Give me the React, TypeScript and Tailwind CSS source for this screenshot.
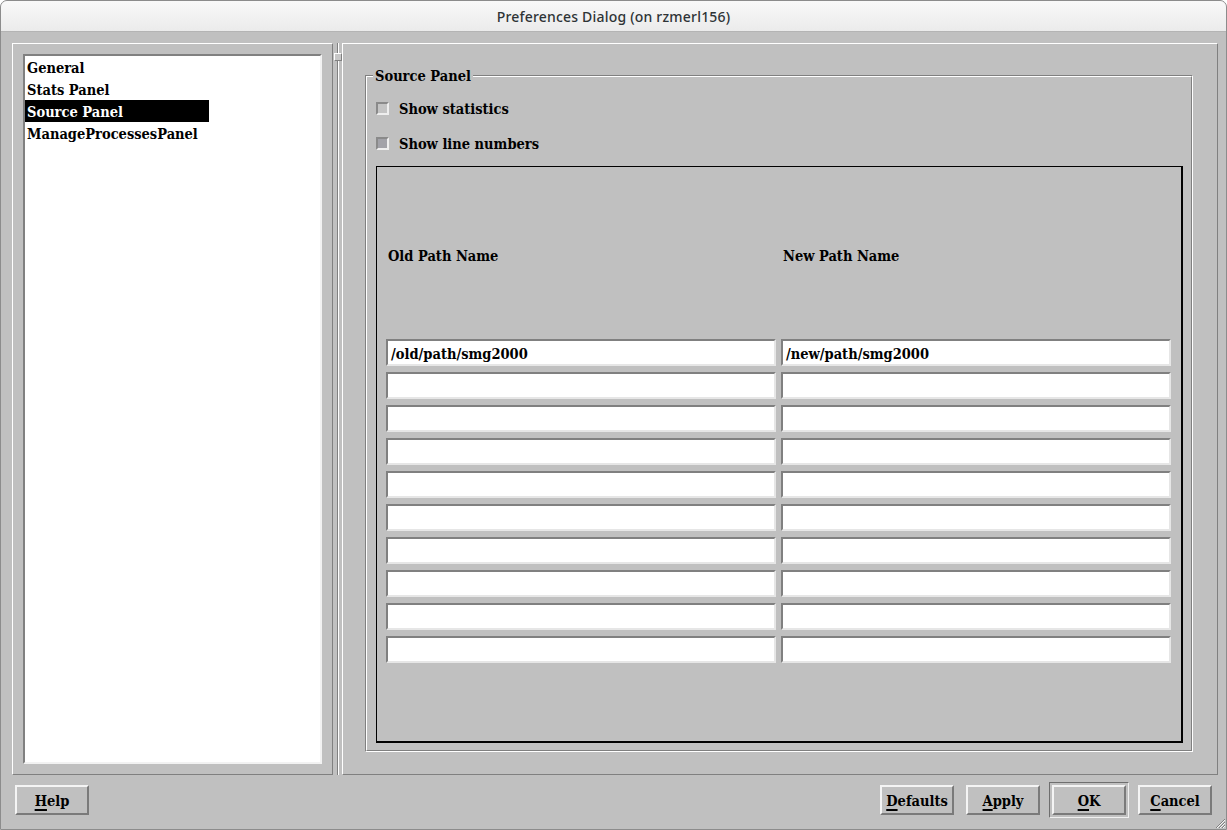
import React from 'react';

const serif = "font-['DejaVu_Serif',serif] [font-stretch:condensed] font-bold text-[14.5px] text-black relative top-[1px]";

const items = ['General', 'Stats Panel', 'Source Panel', 'ManageProcessesPanel'];

function Button({ label, className = '' }: { label: string; className?: string }) {
  return (
    <div
      className={`h-[30px] w-[74px] flex items-center justify-center border-2 border-t-[#f4f4f4] border-l-[#f4f4f4] border-b-[#7a7a7a] border-r-[#7a7a7a] bg-[#c0c0c0] ${className}`}>
      <span className={serif}>
        <span className="underline decoration-2 underline-offset-[3px]">{label[0]}</span>
        {label.slice(1)}
      </span>
    </div>
  );
}

function PathInput({ value }: { value?: string }) {
  return (
    <div className="h-[27px] bg-white border-2 border-t-[#808080] border-l-[#808080] border-b-[#e6e6e6] border-r-[#e6e6e6] flex items-center pl-[3px]">
      <span className={serif}>{value}</span>
    </div>
  );
}

function Checkbox({ label, checked }: { label: string; checked?: boolean }) {
  return (
    <div className="h-[22px] flex items-center gap-[10px]">
      <div
        className={`w-[13px] h-[13px] border-2 border-t-[#8a8a8a] border-l-[#8a8a8a] border-b-[#eeeeee] border-r-[#eeeeee] ${checked ? 'bg-[#a2a2a8]' : 'bg-[#c4c4c4]'}`}
      />
      <span className={serif}>{label}</span>
    </div>
  );
}

export default function App() {
  const rows = [
    ['/old/path/smg2000', '/new/path/smg2000'],
    ...Array.from({ length: 9 }, () => ['', '']),
  ];

  return (
    <div className="w-[1227px] h-[830px] flex flex-col border border-[#8c8c8c] rounded-t-[7px] overflow-hidden bg-[#c0c0c0]">
      <div className="h-[31px] shrink-0 flex items-center justify-center bg-gradient-to-b from-[#f9f9f9] to-[#ebebeb] border-b border-[#b4b4b4]">
        <span className="font-['Noto_Sans',sans-serif] text-[14px] tracking-[0.2px] text-[#2e3436] font-medium">
          Preferences Dialog (on rzmerl156)
        </span>
      </div>

      <div className="flex-1 flex flex-col pt-[11px] pl-[11px] pr-[8px]">
        <div className="flex h-[732px]">
          {/* left tree panel */}
          <div className="w-[321px] border border-t-white border-l-white border-b-[#808080] border-r-[#808080] p-[10px]">
            <div className="h-full bg-white border-2 border-t-[#808080] border-l-[#808080] border-b-[#f2f2f2] border-r-[#f2f2f2]">
              {items.map((it) => (
                <div
                  key={it}
                  className={`h-[22px] w-[184px] flex items-center pl-[2px] ${it === 'Source Panel' ? 'bg-black' : ''}`}>
                  <span className={`${serif} ${it === 'Source Panel' ? '!text-white' : ''}`}>{it}</span>
                </div>
              ))}
            </div>
          </div>

          {/* splitter */}
          <div className="w-[9px] relative flex justify-center">
            <div className="w-[2px] h-full border-l border-l-[#808080] border-r border-r-white" />
            <div className="absolute top-[10px] left-[1px] w-[8px] h-[8px] bg-[#c8c8c8] border border-t-white border-l-white border-b-[#808080] border-r-[#808080]" />
          </div>

          {/* right panel */}
          <div className="flex-1 border border-t-white border-l-white border-b-[#808080] border-r-[#808080] pt-[31px] pl-[22px] pr-[24px] pb-[22px]">
            <div className="relative h-full border border-t-[#808080] border-l-[#808080] border-b-white border-r-white">
              <div className="h-full border border-t-white border-l-white border-b-[#808080] border-r-[#808080] flex flex-col pt-[20px] pl-[9px] pr-[8px] pb-[7px]">
                <Checkbox label="Show statistics" />
                <div className="mt-[13px]">
                  <Checkbox label="Show line numbers" checked />
                </div>
                <div className="mt-[12px] flex-1 border-t border-l border-r-2 border-b-2 border-black pt-[77px] px-[9px]">
                  <div className="grid grid-cols-[390px_390px] gap-x-[5px]">
                    <div className="h-[22px] flex items-center pl-[2px]"><span className={serif}>Old Path Name</span></div>
                    <div className="h-[22px] flex items-center pl-[2px]"><span className={serif}>New Path Name</span></div>
                  </div>
                  <div className="mt-[73px] grid grid-cols-[390px_390px] gap-x-[5px] gap-y-[6px]">
                    {rows.map((r, i) => (
                      <React.Fragment key={i}>
                        <PathInput value={r[0]} />
                        <PathInput value={r[1]} />
                      </React.Fragment>
                    ))}
                  </div>
                </div>
              </div>
              <span className="absolute -top-[12px] left-[7px] px-[2px] bg-[#c0c0c0] h-[22px] flex items-center">
                <span className={serif}>Source Panel</span>
              </span>
            </div>
          </div>
        </div>

        {/* buttons */}
        <div className="mt-[10px] flex items-start">
          <Button label="Help" className="ml-[3px] mt-0" />
          <div className="flex-1" />
          <Button label="Defaults" />
          <Button label="Apply" className="ml-[12px]" />
          <div className="ml-[9px] -mt-[3px] w-[80px] h-[36px] border border-t-[#6e6e6e] border-l-[#6e6e6e] border-b-[#f0f0f0] border-r-[#f0f0f0] flex items-center justify-center">
            <Button label="OK" />
          </div>
          <Button label="Cancel" className="ml-[9px] mr-[6px]" />
        </div>
        <div className="flex-1 relative">
          <svg className="absolute right-[-7px] bottom-[1px]" width="12" height="12" viewBox="0 0 12 12">
            {[3, 6, 9, 12].map((o) => (
              <g key={o}>
                <line x1={o} y1={12} x2={12} y2={o} stroke="#808080" strokeWidth="1" />
                <line x1={o + 1} y1={12} x2={12} y2={o + 1} stroke="#f4f4f4" strokeWidth="1" />
              </g>
            ))}
          </svg>
        </div>
      </div>
    </div>
  );
}
